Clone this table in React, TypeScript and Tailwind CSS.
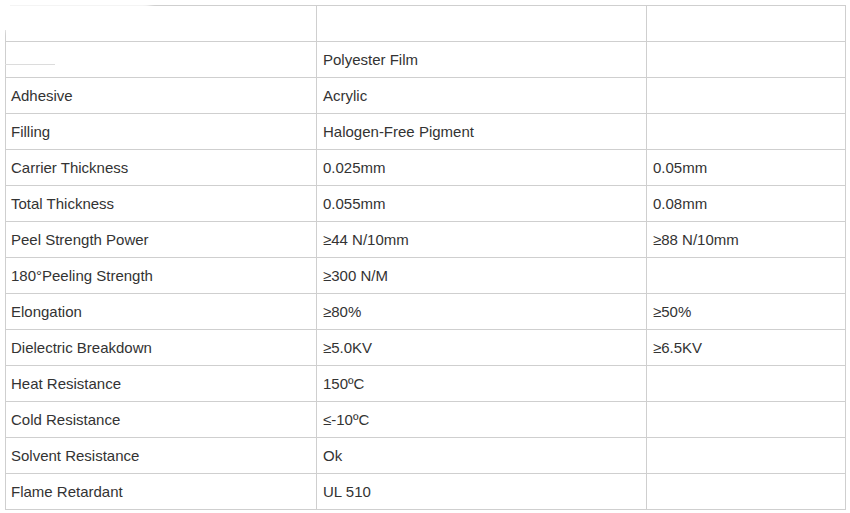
import React from "react";

const rows: [string, string, string][] = [
  ["", "", ""],
  ["", "Polyester Film", ""],
  ["Adhesive", "Acrylic", ""],
  ["Filling", "Halogen-Free Pigment", ""],
  ["Carrier Thickness", "0.025mm", "0.05mm"],
  ["Total Thickness", "0.055mm", "0.08mm"],
  ["Peel Strength Power", "≥44 N/10mm", "≥88 N/10mm"],
  ["180°Peeling Strength", "≥300 N/M", ""],
  ["Elongation", "≥80%", "≥50%"],
  ["Dielectric Breakdown", "≥5.0KV", "≥6.5KV"],
  ["Heat Resistance", "150ºC", ""],
  ["Cold Resistance", "≤-10ºC", ""],
  ["Solvent Resistance", "Ok", ""],
  ["Flame Retardant", "UL 510", ""],
];

export default function App() {
  return (
    <div
      className="w-[850px] h-[513px] bg-white pt-[5px] pl-[5px] relative overflow-hidden"
      style={{ fontFamily: '"Liberation Sans", Arial, sans-serif' }}
    >
      <div className="grid grid-cols-[311px_330px_199px] w-[841px] border-l border-t border-[#cfcfcf] text-[15px] text-[#333333]">
        {rows.map((r, i) =>
          r.map((c, j) => (
            <div
              key={`${i}-${j}`}
              className={`h-[36px] border-r border-b border-[#cfcfcf] flex items-center pt-px ${
                j === 0 ? "pl-[5px]" : "pl-[6px]"
              }`}
            >
              {c}
            </div>
          ))
        )}
      </div>
      {/* faded smudge over the top-left corner */}
      <div className="absolute left-0 top-0 w-[150px] h-[30px] bg-white/80 blur-[3px]" />
      <div className="absolute left-0 top-0 w-[10px] h-[30px] bg-white" />
      <div className="absolute left-[5px] top-[64px] w-[50px] h-px bg-[#dcdcdc]" />
    </div>
  );
}
